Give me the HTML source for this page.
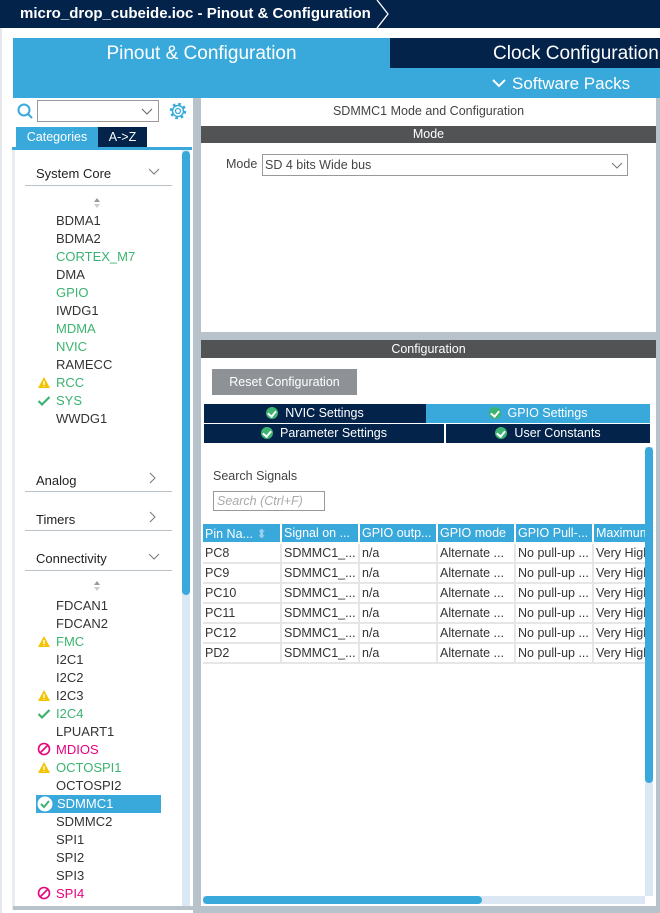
<!DOCTYPE html>
<html><head><meta charset="utf-8"><style>
*{margin:0;padding:0;box-sizing:border-box}
body{width:660px;height:913px;overflow:hidden;background:#fff;font-family:"Liberation Sans",sans-serif;position:relative;color:#333}
.a{position:absolute}
.it{position:absolute;left:56px;font-size:13px;color:#333}
.g{color:#3cb371}
.m{color:#e6007e}
.hd{position:absolute;left:36px;font-size:13px;color:#222}
.ln{position:absolute;left:25px;width:147px;height:1px;background:#b8c0c8}
.tbl{position:absolute;left:203px;top:524px;border-collapse:collapse;font-size:12.5px;table-layout:fixed}
.tbl td,.tbl th{height:20px;padding:0 2px;white-space:nowrap;overflow:hidden;border-right:2px solid #e6e6e6;border-bottom:2px solid #e6e6e6;font-weight:normal;text-align:left}
.tbl th{background:#39a9dc;color:#fff;border-color:#fff;height:19px}
.ck{display:inline-block;width:12px;height:12px;border-radius:50%;background:#3cb371;vertical-align:-2px;margin-right:7px;position:relative}
.ck::after{content:"";position:absolute;left:3px;top:2px;width:4px;height:6px;border:solid #fff;border-width:0 2px 2px 0;transform:rotate(40deg)}
</style></head><body>
<div class="a" style="left:0;top:0;width:660px;height:28px;background:#03234b"></div>
<div class="a" style="left:20px;top:5px;color:#fff;font-weight:bold;font-size:15px;white-space:nowrap">micro_drop_cubeide.ioc - Pinout &amp; Configuration</div>
<svg class="a" style="left:374px;top:0" width="24" height="28"><path d="M3 0 L14 14 L3 28" stroke="#fff" stroke-width="1.3" fill="none"/></svg>
<div class="a" style="left:0;top:28px;width:660px;height:10px;background:#fff"></div>
<div class="a" style="left:0;top:28px;width:2px;height:885px;background:#e4e8ec"></div>
<div class="a" style="left:13px;top:38px;width:647px;height:60px;background:#39a9dc"></div>
<div class="a" style="left:390px;top:38px;width:270px;height:30px;background:#03234b"></div>
<div class="a" style="left:13px;top:43px;width:377px;text-align:center;color:#fff;font-size:19px">Pinout &amp; Configuration</div>
<div class="a" style="left:493px;top:43px;color:#fff;font-size:19px;white-space:nowrap">Clock Configuration</div>
<div class="a" style="left:492px;top:74px;color:#fff;font-size:17px;white-space:nowrap"><svg width="14" height="12" style="margin-right:6px"><path d="M1 3 L7 9 L13 3" stroke="#fff" stroke-width="2" fill="none"/></svg>Software Packs</div>
<!-- left panel -->
<div class="a" style="left:10px;top:98px;width:183px;height:815px;background:#fff"></div>
<div class="a" style="left:193px;top:98px;width:8px;height:815px;background:#b8c2ca"></div>
<div class="a" style="left:656px;top:98px;width:4px;height:815px;background:#b8c2ca"></div>
<svg class="a" style="left:16px;top:102px" width="20" height="20"><circle cx="8" cy="8" r="5.5" stroke="#39a9dc" stroke-width="2" fill="none"/><path d="M12 12 L16 16" stroke="#39a9dc" stroke-width="2"/></svg>
<div class="a" style="left:37px;top:100px;width:122px;height:22px;border:1px solid #999;background:#fff"></div>
<svg class="a" style="left:141px;top:106px" width="12" height="10"><path d="M1 3 L6 8 L11 3" stroke="#666" fill="none"/></svg>
<svg class="a" style="left:168px;top:101px" width="20" height="20" viewBox="0 0 20 20"><circle cx="10" cy="10" r="7" stroke="#39a9dc" stroke-width="2.5" fill="none" stroke-dasharray="2.6 2.9"/><circle cx="10" cy="10" r="5.5" stroke="#39a9dc" stroke-width="1.5" fill="none"/><circle cx="10" cy="10" r="2.5" stroke="#39a9dc" stroke-width="1.3" fill="none"/></svg>
<div class="a" style="left:16px;top:127px;width:82px;height:20px;background:#39a9dc;color:#fff;font-size:12.5px;text-align:center;line-height:20px">Categories</div>
<div class="a" style="left:98px;top:127px;width:49px;height:20px;background:#03234b;color:#fff;font-size:12.5px;text-align:center;line-height:20px">A-&gt;Z</div>
<div class="a" style="left:12px;top:147px;width:180px;height:3px;background:#39a9dc"></div>
<div class="a" style="left:12px;top:150px;width:3px;height:760px;background:#e8ecf0"></div>
<div class="a" style="left:13px;top:906px;width:180px;height:4px;background:#b8c2ca"></div>
<div class="a" style="left:182px;top:150px;width:8px;height:756px;background:#dbe8f4"></div>
<div class="a" style="left:182px;top:151px;width:8px;height:444px;background:#39a9dc;border-radius:4px"></div>
<div class="hd" style="top:166px">System Core</div>
<svg class="a" style="left:148px;top:166px" width="12" height="10"><path d="M1 3 L6 8 L11 3" stroke="#777" fill="none"/></svg>
<div class="ln" style="top:185px"></div>
<svg class="a" style="left:93px;top:197px" width="8" height="12"><path d="M4 1 L7 5 L1 5Z" fill="#999"/><path d="M4 11 L7 7 L1 7Z" fill="#ccc"/></svg>
<div class="it" style="top:213px">BDMA1</div>
<div class="it" style="top:231px">BDMA2</div>
<div class="it g" style="top:249px">CORTEX_M7</div>
<div class="it" style="top:267px">DMA</div>
<div class="it g" style="top:285px">GPIO</div>
<div class="it" style="top:303px">IWDG1</div>
<div class="it g" style="top:321px">MDMA</div>
<div class="it g" style="top:339px">NVIC</div>
<div class="it" style="top:357px">RAMECC</div>
<div class="it g" style="top:375px">RCC</div>
<div class="it g" style="top:393px">SYS</div>
<div class="it" style="top:411px">WWDG1</div>
<div class="hd" style="top:473px">Analog</div>
<svg class="a" style="left:148px;top:472px" width="10" height="12"><path d="M2 1 L7 6 L2 11" stroke="#777" fill="none"/></svg>
<div class="ln" style="top:491px"></div>
<div class="hd" style="top:512px">Timers</div>
<svg class="a" style="left:148px;top:511px" width="10" height="12"><path d="M2 1 L7 6 L2 11" stroke="#777" fill="none"/></svg>
<div class="ln" style="top:530px"></div>
<div class="hd" style="top:551px">Connectivity</div>
<svg class="a" style="left:148px;top:551px" width="12" height="10"><path d="M1 3 L6 8 L11 3" stroke="#777" fill="none"/></svg>
<div class="ln" style="top:570px"></div>
<svg class="a" style="left:93px;top:580px" width="8" height="12"><path d="M4 1 L7 5 L1 5Z" fill="#999"/><path d="M4 11 L7 7 L1 7Z" fill="#ccc"/></svg>
<div class="it" style="top:598px">FDCAN1</div>
<div class="it" style="top:616px">FDCAN2</div>
<div class="it g" style="top:634px">FMC</div>
<div class="it" style="top:652px">I2C1</div>
<div class="it" style="top:670px">I2C2</div>
<div class="it" style="top:688px">I2C3</div>
<div class="it g" style="top:706px">I2C4</div>
<div class="it" style="top:724px">LPUART1</div>
<div class="it m" style="top:742px">MDIOS</div>
<div class="it g" style="top:760px">OCTOSPI1</div>
<div class="it" style="top:778px">OCTOSPI2</div>
<div class="a" style="left:36px;top:795px;width:125px;height:18px;background:#39a9dc"></div>
<div class="it" style="top:796px;left:57px;color:#fff">SDMMC1</div>
<div class="it" style="top:814px">SDMMC2</div>
<div class="it" style="top:832px">SPI1</div>
<div class="it" style="top:850px">SPI2</div>
<div class="it" style="top:868px">SPI3</div>
<div class="it m" style="top:886px">SPI4</div>
<!-- icons -->
<svg class="a" style="left:37px;top:376px" width="14" height="13"><path d="M7 1 L13 12 L1 12Z" fill="#f5c400"/><path d="M7 5 V9 M7 10.2 V11" stroke="#fff" stroke-width="1.4"/></svg>
<svg class="a" style="left:37px;top:635px" width="14" height="13"><path d="M7 1 L13 12 L1 12Z" fill="#f5c400"/><path d="M7 5 V9 M7 10.2 V11" stroke="#fff" stroke-width="1.4"/></svg>
<svg class="a" style="left:37px;top:689px" width="14" height="13"><path d="M7 1 L13 12 L1 12Z" fill="#f5c400"/><path d="M7 5 V9 M7 10.2 V11" stroke="#fff" stroke-width="1.4"/></svg>
<svg class="a" style="left:37px;top:761px" width="14" height="13"><path d="M7 1 L13 12 L1 12Z" fill="#f5c400"/><path d="M7 5 V9 M7 10.2 V11" stroke="#fff" stroke-width="1.4"/></svg>
<svg class="a" style="left:37px;top:395px" width="14" height="12"><path d="M1.5 6 L5 9.5 L12.5 2" stroke="#3cb371" stroke-width="2.2" fill="none"/></svg>
<svg class="a" style="left:37px;top:708px" width="14" height="12"><path d="M1.5 6 L5 9.5 L12.5 2" stroke="#3cb371" stroke-width="2.2" fill="none"/></svg>
<svg class="a" style="left:37px;top:742px" width="14" height="14"><circle cx="7" cy="7" r="5.5" stroke="#e6007e" stroke-width="1.6" fill="none"/><path d="M3.5 10.5 L10.5 3.5" stroke="#e6007e" stroke-width="1.6"/></svg>
<svg class="a" style="left:37px;top:886px" width="14" height="14"><circle cx="7" cy="7" r="5.5" stroke="#e6007e" stroke-width="1.6" fill="none"/><path d="M3.5 10.5 L10.5 3.5" stroke="#e6007e" stroke-width="1.6"/></svg>
<svg class="a" style="left:37px;top:796px" width="16" height="16"><circle cx="8" cy="8" r="7.5" fill="#fff"/><path d="M4 8 L7 11 L12 5" stroke="#3cb371" stroke-width="2" fill="none"/></svg>
<!-- right top -->
<div class="a" style="left:201px;top:98px;width:455px;height:234px;background:#fff"></div>
<div class="a" style="left:201px;top:104px;width:455px;text-align:center;font-size:12.5px;color:#444">SDMMC1 Mode and Configuration</div>
<div class="a" style="left:201px;top:126px;width:455px;height:17px;background:#515355;color:#fff;font-size:12.5px;text-align:center;line-height:17px">Mode</div>
<div class="a" style="left:226px;top:157px;font-size:12.5px;color:#444">Mode</div>
<div class="a" style="left:262px;top:154px;width:366px;height:22px;border:1px solid #999;font-size:12.5px;padding:3px 2px;color:#444">SD 4 bits Wide bus</div>
<svg class="a" style="left:611px;top:160px" width="12" height="10"><path d="M1 3 L6 8 L11 3" stroke="#777" fill="none"/></svg>
<div class="a" style="left:201px;top:332px;width:455px;height:8px;background:#b8c2ca"></div>
<div class="a" style="left:201px;top:340px;width:455px;height:18px;background:#515355;color:#fff;font-size:12.5px;text-align:center;line-height:18px">Configuration</div>
<div class="a" style="left:201px;top:358px;width:455px;height:548px;background:#fff"></div>
<div class="a" style="left:212px;top:369px;width:145px;height:26px;background:#8e9297;color:#fff;font-size:12.5px;text-align:center;line-height:26px">Reset Configuration</div>
<div class="a" style="left:204px;top:404px;width:222px;height:19px;background:#03234b;color:#fff;font-size:12.5px;text-align:center;line-height:19px"><span class="ck"></span>NVIC Settings</div>
<div class="a" style="left:426px;top:404px;width:224px;height:19px;background:#39a9dc;color:#fff;font-size:12.5px;text-align:center;line-height:19px"><span class="ck"></span>GPIO Settings</div>
<div class="a" style="left:204px;top:424px;width:240px;height:19px;background:#03234b;color:#fff;font-size:12.5px;text-align:center;line-height:19px"><span class="ck"></span>Parameter Settings</div>
<div class="a" style="left:446px;top:424px;width:204px;height:19px;background:#03234b;color:#fff;font-size:12.5px;text-align:center;line-height:19px"><span class="ck"></span>User Constants</div>
<div class="a" style="left:213px;top:469px;font-size:12.5px;color:#444">Search Signals</div>
<div class="a" style="left:213px;top:491px;width:112px;height:20px;border:1px solid #999;font-size:12.5px;font-style:italic;color:#aaa;padding:2px 3px">Search (Ctrl+F)</div>
<div class="a" style="left:203px;top:524px;width:443px;height:140px;overflow:hidden">
<table class="tbl" style="left:0;top:0;width:470px">
<colgroup><col style="width:78px"><col style="width:78px"><col style="width:78px"><col style="width:78px"><col style="width:78px"><col style="width:80px"></colgroup>
<tr><th>Pin Na... <span style="color:#9cd0ec">⬍</span></th><th>Signal on ...</th><th>GPIO outp...</th><th>GPIO mode</th><th>GPIO Pull-...</th><th>Maximum</th></tr>
<tr><td>PC8</td><td>SDMMC1_...</td><td>n/a</td><td>Alternate ...</td><td>No pull-up ...</td><td>Very High</td></tr>
<tr><td>PC9</td><td>SDMMC1_...</td><td>n/a</td><td>Alternate ...</td><td>No pull-up ...</td><td>Very High</td></tr>
<tr><td>PC10</td><td>SDMMC1_...</td><td>n/a</td><td>Alternate ...</td><td>No pull-up ...</td><td>Very High</td></tr>
<tr><td>PC11</td><td>SDMMC1_...</td><td>n/a</td><td>Alternate ...</td><td>No pull-up ...</td><td>Very High</td></tr>
<tr><td>PC12</td><td>SDMMC1_...</td><td>n/a</td><td>Alternate ...</td><td>No pull-up ...</td><td>Very High</td></tr>
<tr><td>PD2</td><td>SDMMC1_...</td><td>n/a</td><td>Alternate ...</td><td>No pull-up ...</td><td>Very High</td></tr>
</table></div>
<div class="a" style="left:645px;top:447px;width:8px;height:449px;background:#dbe8f4"></div>
<div class="a" style="left:645px;top:447px;width:8px;height:336px;background:#39a9dc;border-radius:4px"></div>
<div class="a" style="left:203px;top:896px;width:442px;height:8px;background:#dbe8f4"></div>
<div class="a" style="left:203px;top:896px;width:279px;height:8px;background:#39a9dc;border-radius:4px"></div>
<div class="a" style="left:201px;top:906px;width:459px;height:7px;background:#b8c2ca"></div>
</body></html>
